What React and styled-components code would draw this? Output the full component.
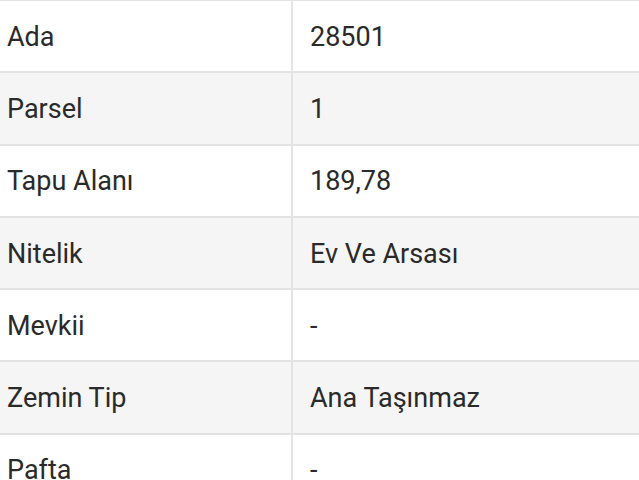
import React from "react";
import styled, { createGlobalStyle } from "styled-components";

const GlobalStyle = createGlobalStyle`
  html, body {
    margin: 0;
    padding: 0;
    background: #ffffff;
    overflow: hidden;
  }
  body {
    font-family: Roboto, "Noto Sans", "Liberation Sans", sans-serif;
  }
`;

const Table = styled.div`
  width: 639px;
  border-top: 2px solid #e3e3e3;
  margin-top: -1px;
`;

const Row = styled.div`
  display: grid;
  grid-template-columns: 291px 1fr;
  height: 70.3px;
  border-bottom: 2px solid #e3e3e3;
  background: ${(props) => (props.shaded ? "#f5f5f5" : "#ffffff")};
`;

const Cell = styled.div`
  display: flex;
  align-items: center;
  padding-left: ${(props) => (props.value ? "17px" : "7px")};
  padding-top: 1px;
  font-size: 27px;
  color: #2a2a2a;
  border-left: ${(props) => (props.value ? "2px solid #e3e3e3" : "none")};
  white-space: nowrap;
`;

const rows = [
  ["Ada", "28501"],
  ["Parsel", "1"],
  ["Tapu Alanı", "189,78"],
  ["Nitelik", "Ev Ve Arsası"],
  ["Mevkii", "-"],
  ["Zemin Tip", "Ana Taşınmaz"],
  ["Pafta", "-"],
];

const App = () => {
  return (
    <>
      <GlobalStyle />
      <Table>
        {rows.map(([label, value], index) => (
          <Row key={label} shaded={index % 2 === 1}>
            <Cell>{label}</Cell>
            <Cell value>{value}</Cell>
          </Row>
        ))}
      </Table>
    </>
  );
};

export default App;
